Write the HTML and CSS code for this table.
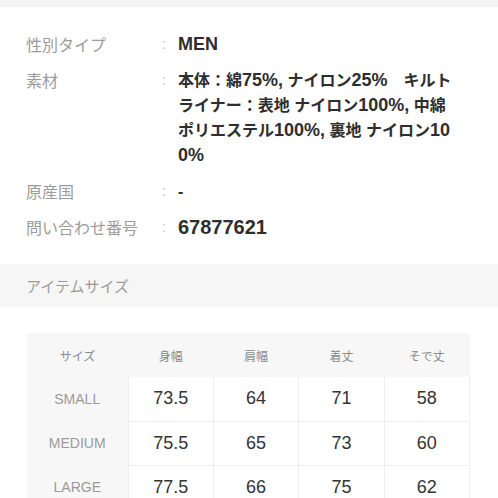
FILE: index.html
```html
<!DOCTYPE html>
<html lang="ja">
<head>
<meta charset="utf-8">
<link rel="stylesheet" href="styles.css">
</head>
<body>
<div class="topbar"></div>
<dl class="info">
  <div class="row">
    <dt class="label">性別タイプ</dt>
    <dd class="colon">:</dd>
    <dd class="value latin">MEN</dd>
  </div>
  <div class="row">
    <dt class="label">素材</dt>
    <dd class="colon">:</dd>
    <dd class="value">本体：綿<span class="num">75%,</span> ナイロン<span class="num">25%</span>　キルト<br>ライナー：表地 ナイロン<span class="num">100%,</span> 中綿<br>ポリエステル<span class="num">100%,</span> 裏地 ナイロン<span class="num">10</span><br><span class="num">0%</span></dd>
  </div>
  <div class="row">
    <dt class="label">原産国</dt>
    <dd class="colon">:</dd>
    <dd class="value">-</dd>
  </div>
  <div class="row">
    <dt class="label">問い合わせ番号</dt>
    <dd class="colon">:</dd>
    <dd class="value latin big">67877621</dd>
  </div>
</dl>
<div class="band">アイテムサイズ</div>
<table class="sizes">
  <colgroup><col class="c-first"><col><col><col><col></colgroup>
  <thead>
    <tr><th>サイズ</th><th>身幅</th><th>肩幅</th><th>着丈</th><th>そで丈</th></tr>
  </thead>
  <tbody>
    <tr><th>SMALL</th><td>73.5</td><td>64</td><td>71</td><td>58</td></tr>
    <tr><th>MEDIUM</th><td>75.5</td><td>65</td><td>73</td><td>60</td></tr>
    <tr><th>LARGE</th><td>77.5</td><td>66</td><td>75</td><td>62</td></tr>
  </tbody>
</table>
</body>
</html>
```
FILE: styles.css
```css
* { box-sizing: border-box; }
html, body { margin: 0; padding: 0; background: #fff; }
body {
  font-family: "Liberation Sans", "Noto Sans CJK JP", sans-serif;
  color: #333;
  width: 498px;
  overflow: hidden;
}
.topbar { height: 7px; background: #f4f4f4; }
.info {
  margin: 0;
  padding: 25px 0 0 26px;
  display: flex;
  flex-direction: column;
  gap: 11px;
}
.row {
  display: grid;
  grid-template-columns: 136px 16px 1fr;
  line-height: 25px;
}
.label {
  font-size: 16px;
  color: #9c9c9c;
  font-family: "Noto Sans CJK JP", sans-serif;
  white-space: nowrap;
}
.colon {
  margin: 0;
  font-size: 14px;
  color: #c4c4c4;
}
.value {
  margin: 0;
  font-size: 16px;
  font-weight: 700;
  color: #2e2e2e;
  white-space: nowrap;
}
.value .num { font-size: 18px; }
.value.latin { font-size: 18px; }
.value.big { font-size: 20px; }
.band {
  margin-top: 24px;
  height: 43px;
  background: #f6f6f6;
  padding-left: 26px;
  line-height: 43px;
  font-size: 15px;
  color: #9a9a9a;
  font-family: "Noto Sans CJK JP", sans-serif;
}
.sizes {
  margin: 26px 0 0 27px;
  width: 443px;
  border-collapse: collapse;
  table-layout: fixed;
}
.c-first { width: 101px; }
.sizes th, .sizes td {
  height: 44px;
  padding: 0;
  text-align: center;
  vertical-align: middle;
}
.sizes thead th {
  background: #f7f7f7;
  font-size: 12px;
  font-weight: 400;
  color: #8a8a8a;
  font-family: "Noto Sans CJK JP", sans-serif;
}
.sizes tbody th {
  background: #f7f7f7;
  font-size: 14px;
  font-weight: 400;
  color: #9a9a9a;
}
.sizes td {
  background: #fff;
  font-size: 18px;
  color: #333;
  border: 1px solid #efefef;
}
.sizes tbody tr:first-child td { border-top: none; }
```
